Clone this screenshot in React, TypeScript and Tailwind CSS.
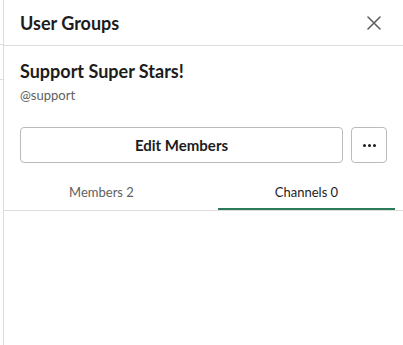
import React from 'react';

export default function App() {
    return (
        <div className="w-[403px] h-[345px] bg-white flex overflow-hidden font-['Lato','Liberation_Sans',sans-serif] text-[#1d1c1d]">
            {/* sliver of the content behind the panel */}
            <div className="w-[3px] shrink-0 flex flex-col">
                <div className="h-[45px] border-b border-[#dddddd]" />
                <div className="h-[35px] border-b border-[#dddddd]" />
            </div>

            <div className="flex-1 border-l border-[#dddddd] flex flex-col">
                {/* Header */}
                <div className="h-[46px] flex items-center justify-between pl-4 pr-[17px] border-b border-[#dddddd]">
                    <h2 className="text-[18px] font-bold leading-none">User Groups</h2>
                    <button type="button" className="w-[24px] h-[24px] flex items-center justify-center text-[#616061]">
                        <svg width="14" height="14" viewBox="0 0 14 14" fill="none" stroke="currentColor" strokeWidth="1.6" strokeLinecap="round">
                            <path d="M1 1L13 13M13 1L1 13" />
                        </svg>
                    </button>
                </div>

                {/* Group info */}
                <div className="px-4 pt-[14px]">
                    <h3 className="text-[18px] font-bold leading-[22px]">Support Super Stars!</h3>
                    <p className="text-[13px] text-[#616061] leading-[18px] mt-[4px]">@support</p>
                </div>

                <div className="flex gap-2 pl-4 pr-4 mt-[23px]">
                    <button
                        type="button"
                        className="w-[323px] h-[36px] rounded-[4px] border border-[#bbbbbb] text-[15px] font-bold flex items-center justify-center"
                    >
                        Edit Members
                    </button>
                    <button
                        type="button"
                        className="w-[36px] h-[36px] rounded-[4px] border border-[#bbbbbb] flex items-center justify-center gap-[2px]"
                    >
                        <span className="w-[3px] h-[3px] rounded-full bg-[#1d1c1d]" />
                        <span className="w-[3px] h-[3px] rounded-full bg-[#1d1c1d]" />
                        <span className="w-[3px] h-[3px] rounded-full bg-[#1d1c1d]" />
                    </button>
                </div>

                {/* Tabs */}
                <div className="mt-[12px] border-b border-[#dddddd] flex pl-[9px] pr-[8px]">
                    <div className="w-[177px] h-[35px] flex items-center justify-center text-[13px] text-[#616061]">
                        Members 2
                    </div>
                    <div className="w-[28px]" />
                    <div className="w-[177px] h-[35px] flex items-center justify-center text-[13px] text-[#1d1c1d] border-b-2 border-[#2b7a5a] -mb-px pt-[2px]">
                        Channels 0
                    </div>
                </div>
            </div>
        </div>
    );
}
